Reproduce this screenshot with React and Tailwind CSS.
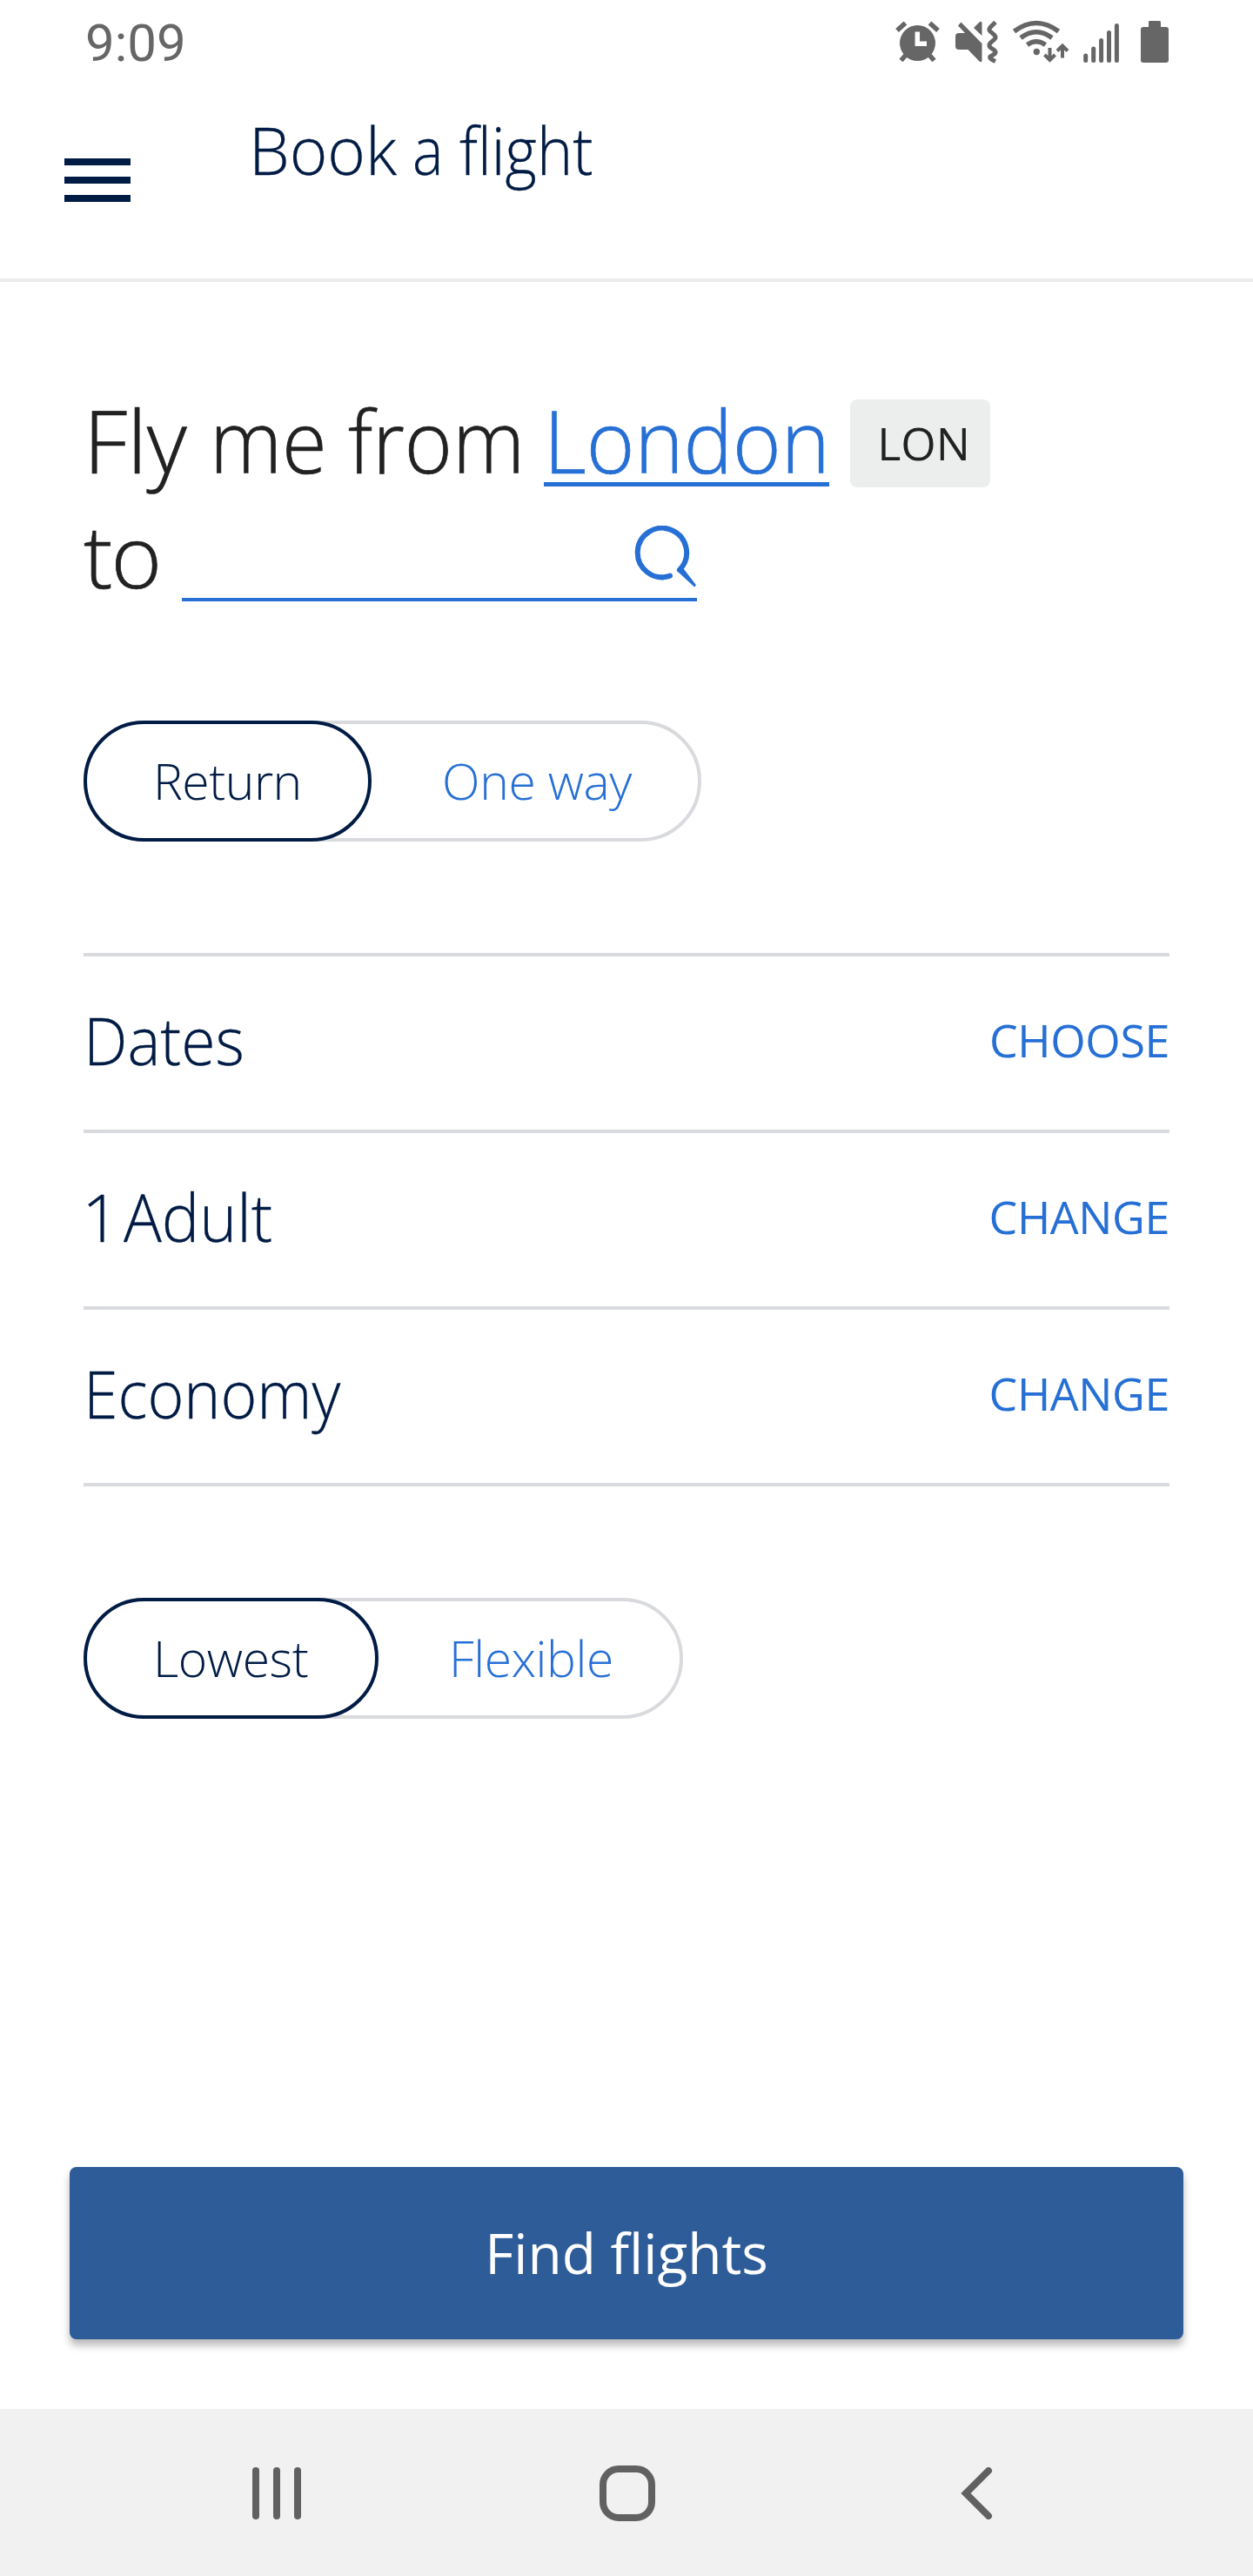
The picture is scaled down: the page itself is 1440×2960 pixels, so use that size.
const word = "inline-block shrink-0 origin-left whitespace-nowrap ";

const options = [
  { words: [["Dates", "scale-x-[0.94]"]], action: "CHOOSE" },
  { words: [["1", "-ml-[2px] w-[48px]"], ["Adult", "scale-x-[0.96]"]], action: "CHANGE" },
  { words: [["Economy", "scale-x-[0.94]"]], action: "CHANGE" },
];

function StatusIcons() {
  return (
    <svg className="h-[100px] w-[380px]" viewBox="0 0 380 100" fill="none" stroke="#666666" aria-hidden="true">
      <g strokeWidth="5.5">
        <circle cx="54.5" cy="49.5" r="20.5" fill="#666666" stroke="none" />
        <path d="M31 35 40.5 26.5M78 35 68.500 26.500M42 62 35.500 69.500M67 62 73.500 69.500" />
        <path d="M54.300 36.500V50.300H65" stroke="#ffffff" />
      </g>
      <g fill="#666666" stroke="none">
        <path d="M98 42Q98 38 102 38H109L101 29.500 104.500 25.500 128.500 50V69Q128.500 73 125 70L112.500 57H102Q98 57 98 53Z" />
        <path d="M119 32 125.500 25.500Q128.500 23.500 128.500 27V41Z" />
      </g>
      <path d="M144 25.500 138 31.500Q136 34 138 36L143 40.500Q145 43 143 45L138 49.500Q136 52 138 54.500L143 58Q145 60 143 62L138 65Q136 67 144 70.500" strokeWidth="5" />
      <g strokeWidth="5.500">
        <path d="M165.500 36Q191 17 216.500 36M173 43.500Q191 30 209 43.500M180.500 51.500Q191 44 201.500 51.500" />
        <circle cx="191.300" cy="59.500" r="3.700" fill="#666666" stroke="none" />
      </g>
      <path d="M206.500 55V69M200.500 63 206.500 69 212.500 63M221 66.500V53M215 58.500 221 52.500 227 58.500" strokeWidth="4" />
      <path d="M247.700 64V69.500M256.700 56V69.500M265.600 46.500V69.500M274.500 37.500V69.500M283.400 29.500V69.500" strokeWidth="5" strokeLinecap="round" />
      <path d="M320 24.500Q320 24 321.500 24H332.500Q334 24 334 25.500V31H340Q343 31 343 34V69Q343 72 340 72H314Q311 72 311 69V34Q311 31 314 31H320Z" fill="#666666" stroke="none" />
    </svg>
  );
}

function SearchIcon() {
  return (
    <svg className="mt-[34px] h-[74px] w-[72px]" viewBox="729 604 72 74" fill="none" stroke="#266fd5" aria-hidden="true">
      <path d="M770 661.700A28.200 28.200 0 1 1 781 654.800" strokeWidth="6" strokeLinecap="round" strokeLinejoin="round" />
      <path d="M778.500 655.500 785 654 799 672.300 798 673.500Z" fill="#266fd5" strokeWidth="1.500" strokeLinejoin="round" />
    </svg>
  );
}

function Toggle({ selected, other, widths, otherPad, spacing }) {
  return (
    <div className={"flex h-[139px] rounded-full border-4 border-[#d8dadd] text-[57px] font-light " + widths[0]}>
      <button className={"-m-1 h-[139px] shrink-0 rounded-full border-4 border-[#001b44] bg-white pl-[76px] text-left leading-[131px] whitespace-nowrap text-[#001b44] " + widths[1] + " " + spacing[0]}>
        {selected}
      </button>
      <button className={"leading-[131px] whitespace-nowrap text-[#266fd5] " + otherPad + " " + spacing[1]}>{other}</button>
    </div>
  );
}

export default function App() {
  return (
    <div className="flex h-[2960px] w-[1440px] flex-col overflow-hidden bg-white font-['Open_Sans','Noto_Sans',sans-serif]">
      <div className="flex h-[100px] shrink-0 justify-between pr-[60px] pl-[98px]">
        <span className="font-['Roboto',sans-serif] text-[60px] leading-[100px] text-[#666666]">9:09</span>
        <StatusIcons />
      </div>

      <header className="flex h-[224px] shrink-0 border-b-4 border-[#eaecec] pl-[74px] text-[#001b44]">
        <button className="mt-[82px] flex h-[50px] w-[76px] flex-col justify-between" aria-label="Menu">
          <span className="h-2 w-full bg-[#001b44]" />
          <span className="h-2 w-full bg-[#001b44]" />
          <span className="h-2 w-full bg-[#001b44]" />
        </button>
        <h1 className="mt-[24px] ml-[136px] flex text-[76px] leading-[96px] font-[340] [-webkit-text-stroke:0.3px]">
          <span className={word + "w-[188px] scale-x-[0.98]"}>Book</span>
          <span className={word + "w-[54px] scale-x-[0.88]"}>a</span>
          <span className={word + "scale-x-[0.92]"}>flight</span>
        </h1>
      </header>

      <main className="flex shrink-0 flex-col px-24 pt-[115px]">
        <div className="flex h-[132px] text-[100px] leading-[132px] font-[350] whitespace-nowrap text-[#212121] [-webkit-text-stroke:0.7px]">
          <span className={word + "w-[145px]"}>Fly</span>
          <span className={word + "w-[159px] scale-x-[0.94]"}>me</span>
          <span className={word + "w-[225px] scale-x-[0.94]"}>from</span>
          <a className="h-[120px] w-[328px] border-b-[5px] border-[#266fd5] text-[#266fd5]">
            <span className={word + "scale-x-[0.95]"}>London</span>
          </a>
          <span className="mt-[20px] ml-6 h-[101px] w-[161px] rounded-lg bg-[#ebeeed] pl-[8px] text-center text-[52px] leading-[100px] font-normal [-webkit-text-stroke:0px]">LON</span>
        </div>
        <div className="flex h-[132px] text-[100px] leading-[132px] font-[350] text-[#212121] [-webkit-text-stroke:0.7px]">
          <span className="w-[113px] tracking-[-2px]">to</span>
          <div className="flex h-[120px] w-[592px] justify-end border-b-4 border-[#266fd5]">
            <div className="-mt-px">
              <SearchIcon />
            </div>
          </div>
        </div>

        <div className="mt-[125px]">
          <Toggle selected="Return" other="One way" widths={["w-[710px]", "w-[331px]"]} otherPad="pl-[85px]" spacing={["tracking-[-0.5px]", "tracking-[-0.4px]"]} />
        </div>

        <ul className="mt-32 border-b-4 border-[#d8dadd]">
          {options.map((o, i) => (
            <li key={i} className="flex h-[203px] justify-between border-t-4 border-[#d8dadd]">
              <div className="flex text-[76px] leading-[191px] font-[340] text-[#001b44] [-webkit-text-stroke:0.3px]">
                {o.words.map(([text, style]) => (
                  <span key={text} className={word + style}>{text}</span>
                ))}
              </div>
              <button className="h-[192px] text-[52px] leading-[192px] tracking-[-0.4px] text-[#266fd5]">{o.action}</button>
            </li>
          ))}
        </ul>

        <div className="mt-32">
          <Toggle selected="Lowest" other="Flexible" widths={["w-[689px]", "w-[339px]"]} otherPad="pl-[85px]" spacing={["tracking-[-0.4px]", "tracking-[-0.4px]"]} />
        </div>
      </main>

      <button className="mx-20 mt-[515px] h-[198px] shrink-0 rounded-lg bg-[#2e5c99] text-[64px] text-white shadow-[0_7px_10px_rgba(0,0,0,0.28)]">
        Find flights
      </button>

      <nav className="mt-20 flex h-48 shrink-0 items-start justify-between bg-[#f1f1f1] px-[290px] pt-[65px]">
        <div className="mt-0.5 flex h-[60px] w-14 justify-between">
          <span className="w-2 rounded-full bg-[#616161]" />
          <span className="w-2 rounded-full bg-[#616161]" />
          <span className="w-2 rounded-full bg-[#616161]" />
        </div>
        <div className="ml-[-8px] size-16 rounded-[22px] border-8 border-[#616161]" />
        <svg className="mt-0.5 h-[60px] w-[46px]" viewBox="0 0 46 60" fill="none" stroke="#616161" aria-hidden="true">
          <path d="M32 4 6 30 32 56" strokeWidth="8" strokeLinecap="round" />
        </svg>
      </nav>
    </div>
  );
}
